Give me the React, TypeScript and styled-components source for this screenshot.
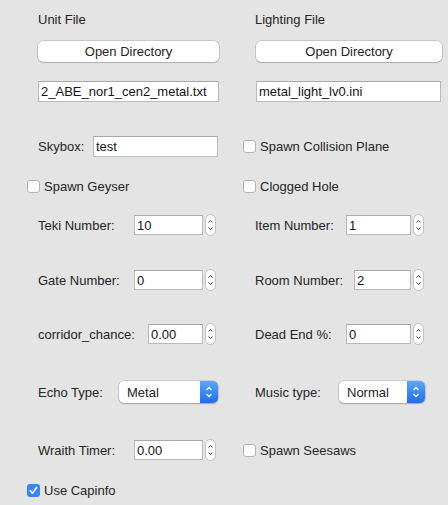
import React from "react";
import styled, { createGlobalStyle } from "styled-components";

const GlobalStyle = createGlobalStyle`
  html, body { margin: 0; padding: 0; background: #e4e4e4; }
  body {
    font-family: "Liberation Sans", Arial, sans-serif;
    font-size: 13px;
    color: #252525;
  }
`;

const Page = styled.div`
  width: 448px;
  height: 505px;
  display: grid;
  grid-template-columns: 224px 224px;
  grid-template-rows: 39px 25px 55px 55px 25px 52px 58px 50px 66px 50px 30px;
  background: #e4e4e4;
  overflow: hidden;
`;

const Cell = styled.div<{ $pl: number }>`
  display: flex;
  align-items: center;
  padding-left: ${(p) => p.$pl}px;
  min-width: 0;
`;

const Label = styled.span<{ $w?: number }>`
  display: inline-block;
  white-space: nowrap;
  line-height: 15px;
  flex: none;
  ${(p) => (p.$w ? `width: ${p.$w}px;` : "")}
`;

const PushButton = styled.button<{ $w: number }>`
  width: ${(p) => p.$w}px;
  height: 21px;
  padding: 0;
  background: #ffffff;
  border: none;
  border-radius: 5px;
  box-shadow: 0 0 0 0.5px rgba(0, 0, 0, 0.25), 0 1px 1px rgba(0, 0, 0, 0.12);
  font: 13px "Liberation Sans", Arial, sans-serif;
  color: #252525;
`;

const TextField = styled.input<{ $w: number; $h?: number }>`
  box-sizing: border-box;
  width: ${(p) => p.$w}px;
  height: ${(p) => p.$h ?? 21}px;
  padding: 0 2px;
  margin: 0;
  background: #ffffff;
  border: 1px solid #bababa;
  border-top-color: #a9a9a9;
  border-radius: 0;
  outline: none;
  font: 13px "Liberation Sans", Arial, sans-serif;
  color: #151515;
  flex: none;
`;

const Spin = styled.div`
  display: flex;
  align-items: center;
  gap: 2px;
`;

const StepperBox = styled.div`
  box-sizing: border-box;
  width: 11px;
  height: 22px;
  border-radius: 6px;
  background: #ffffff;
  border: 1px solid #c0c0c0;
  display: flex;
  align-items: center;
  justify-content: center;
  flex: none;
`;

const SelectBox = styled.div<{ $w: number }>`
  box-sizing: border-box;
  width: ${(p) => p.$w}px;
  height: 22px;
  display: flex;
  align-items: center;
  background: #ffffff;
  border-radius: 5px;
  box-shadow: 0 0 0 0.5px rgba(0, 0, 0, 0.2), 0 1px 1.5px rgba(0, 0, 0, 0.2);
  padding-left: 8px;
  flex: none;
`;

const SelectText = styled.span`
  flex: 1;
  line-height: 15px;
  color: #252525;
`;

const SelectArrow = styled.div`
  width: 18px;
  height: 22px;
  border-radius: 0 5px 5px 0;
  background: linear-gradient(#5ea6fb, #1c6ef2);
  display: flex;
  align-items: center;
  justify-content: center;
`;

const CheckRow = styled.label`
  display: flex;
  align-items: center;
  gap: 4px;
  white-space: nowrap;
`;

const CheckBox = styled.span<{ $on?: boolean }>`
  box-sizing: border-box;
  width: 13px;
  height: 13px;
  border-radius: 3px;
  background: ${(p) => (p.$on ? "#3a85f6" : "#ffffff")};
  border: ${(p) => (p.$on ? "none" : "1px solid #b4b4b4")};
  display: flex;
  align-items: center;
  justify-content: center;
  flex: none;
`;

const Stepper = () => (
  <StepperBox>
    <svg width="9" height="20" viewBox="0 0 9 20">
      <path d="M2.5 7.5 L4.5 5.5 L6.5 7.5" fill="none" stroke="#3a3a3a" strokeWidth="1" />
      <path d="M2.5 12.5 L4.5 14.5 L6.5 12.5" fill="none" stroke="#3a3a3a" strokeWidth="1" />
    </svg>
  </StepperBox>
);

const SpinField = ({ w, value }: { w: number; value: string }) => (
  <Spin>
    <TextField $w={w} $h={20} defaultValue={value} readOnly />
    <Stepper />
  </Spin>
);

const Select = ({ w, value }: { w: number; value: string }) => (
  <SelectBox $w={w}>
    <SelectText>{value}</SelectText>
    <SelectArrow>
      <svg width="10" height="16" viewBox="0 0 10 16">
        <path d="M2.5 6 L5 3.5 L7.5 6" fill="none" stroke="#ffffff" strokeWidth="1.3" />
        <path d="M2.5 10 L5 12.5 L7.5 10" fill="none" stroke="#ffffff" strokeWidth="1.3" />
      </svg>
    </SelectArrow>
  </SelectBox>
);

const Check = ({ label, on }: { label: string; on?: boolean }) => (
  <CheckRow>
    <CheckBox $on={on}>
      {on && (
        <svg width="11" height="11" viewBox="0 0 11 11">
          <path d="M2.3 5.8 L4.4 8.2 L8.7 2.6" fill="none" stroke="#ffffff" strokeWidth="1.7" strokeLinecap="round" strokeLinejoin="round" />
        </svg>
      )}
    </CheckBox>
    <Label>{label}</Label>
  </CheckRow>
);

export default function App() {
  return (
    <>
      <GlobalStyle />
      <Page>
        <Cell $pl={38}><Label>Unit File</Label></Cell>
        <Cell $pl={31}><Label>Lighting File</Label></Cell>

        <Cell $pl={38}><PushButton $w={181}>Open Directory</PushButton></Cell>
        <Cell $pl={32}><PushButton $w={186}>Open Directory</PushButton></Cell>

        <Cell $pl={38}><TextField $w={181} defaultValue="2_ABE_nor1_cen2_metal.txt" readOnly /></Cell>
        <Cell $pl={32}><TextField $w={185} defaultValue="metal_light_lv0.ini" readOnly /></Cell>

        <Cell $pl={38}>
          <Label $w={55}>Skybox:</Label>
          <TextField $w={125} defaultValue="test" readOnly />
        </Cell>
        <Cell $pl={19}><Check label="Spawn Collision Plane" /></Cell>

        <Cell $pl={27}><Check label="Spawn Geyser" /></Cell>
        <Cell $pl={19}><Check label="Clogged Hole" /></Cell>

        <Cell $pl={38}>
          <Label $w={96}>Teki Number:</Label>
          <SpinField w={69} value="10" />
        </Cell>
        <Cell $pl={31}>
          <Label $w={91}>Item Number:</Label>
          <SpinField w={65} value="1" />
        </Cell>

        <Cell $pl={38}>
          <Label $w={96}>Gate Number:</Label>
          <SpinField w={69} value="0" />
        </Cell>
        <Cell $pl={31}>
          <Label $w={99}>Room Number:</Label>
          <SpinField w={57} value="2" />
        </Cell>

        <Cell $pl={38}>
          <Label $w={110}>corridor_chance:</Label>
          <SpinField w={55} value="0.00" />
        </Cell>
        <Cell $pl={31}>
          <Label $w={91}>Dead End %:</Label>
          <SpinField w={65} value="0" />
        </Cell>

        <Cell $pl={38}>
          <Label $w={81}>Echo Type:</Label>
          <Select w={99} value="Metal" />
        </Cell>
        <Cell $pl={31}>
          <Label $w={84}>Music type:</Label>
          <Select w={86} value="Normal" />
        </Cell>

        <Cell $pl={38}>
          <Label $w={96}>Wraith Timer:</Label>
          <SpinField w={69} value="0.00" />
        </Cell>
        <Cell $pl={19}><Check label="Spawn Seesaws" /></Cell>

        <Cell $pl={27}><Check label="Use Capinfo" on /></Cell>
        <Cell $pl={0} />
      </Page>
    </>
  );
}
